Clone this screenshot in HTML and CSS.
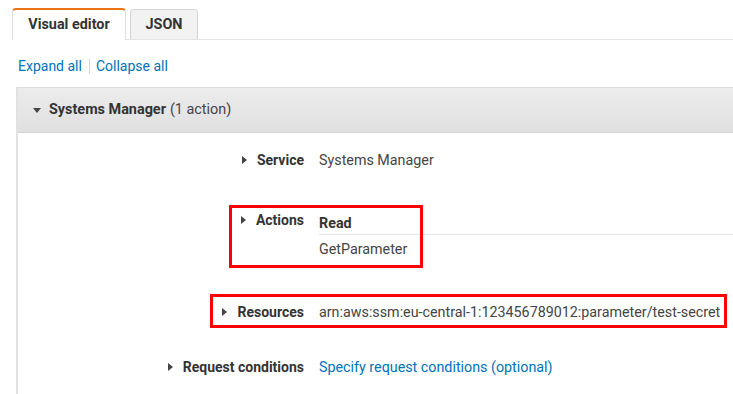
FILE: index.html
```html
<!DOCTYPE html>
<html>
<head>
<meta charset="utf-8">
<link rel="stylesheet" href="styles.css">
</head>
<body>
<div class="tabs">
  <div class="tab tab-active">Visual editor</div>
  <div class="tab">JSON</div>
</div>
<div class="links">
  <a class="link">Expand all</a>
  <span class="sep"></span>
  <a class="link">Collapse all</a>
</div>
<div class="panel">
  <div class="panel-header">
    <span class="caret-down"></span>
    <span class="panel-title">Systems Manager</span>
    <span class="panel-count">(1 action)</span>
  </div>
  <div class="panel-body">
    <div class="row row-service">
      <div class="label"><span class="caret-right"></span>Service</div>
      <div class="value">Systems Manager</div>
    </div>
    <div class="row row-actions">
      <div class="label"><span class="caret-right"></span>Actions</div>
      <div class="value">
        <div class="group-title">Read</div>
        <div class="group-item">GetParameter</div>
      </div>
      <div class="highlight highlight-actions"></div>
    </div>
    <div class="row row-resources">
      <div class="label"><span class="caret-right"></span>Resources</div>
      <div class="value">arn:aws:ssm:eu-central-1:123456789012:parameter/test-secret</div>
      <div class="highlight highlight-resources"></div>
    </div>
    <div class="row row-conditions">
      <div class="label"><span class="caret-right"></span>Request conditions</div>
      <div class="value"><a class="link">Specify request conditions (optional)</a></div>
    </div>
  </div>
</div>
</body>
</html>
```

FILE: styles.css
```css
html, body {
  margin: 0;
  padding: 0;
  background: #fff;
  overflow: hidden;
}
body {
  font-family: Roboto, "Liberation Sans", sans-serif;
  font-size: 14px;
  color: #444;
  width: 733px;
  height: 394px;
}
.tabs {
  display: flex;
  align-items: flex-end;
  margin: 8px 0 0 12px;
  height: 31px;
  border-bottom: 1px solid #e3e3e3;
}
.tab {
  box-sizing: border-box;
  height: 30px;
  border: 1px solid #d5d5d5;
  border-bottom: none;
  border-radius: 4px 4px 0 0;
  background: #f2f2f2;
  font-weight: 700;
  font-size: 14.4px;
  color: #333;
  display: flex;
  align-items: center;
  justify-content: center;
  width: 68px;
  margin-left: 4px;
}
.tab-active {
  width: 114px;
  height: 32px;
  margin-left: 0;
  margin-bottom: -1px;
  background: #fff;
  border-color: #e0e0e0;
  border-top: 2px solid #ec7211;
  padding-bottom: 1px;
}
.links {
  display: flex;
  align-items: center;
  margin: 16px 0 0 18px;
  height: 20px;
}
.link {
  color: #0073bb;
  cursor: pointer;
}
.sep {
  width: 1px;
  height: 15px;
  background: #d5d5d5;
  margin: 0 6px 0 7px;
}
.panel {
  margin: 11px 0 0 16px;
  border-left: 2px solid #e1e1e1;
  height: 307px;
  font-size: 14.3px;
}
.panel-header {
  box-sizing: border-box;
  height: 46px;
  display: flex;
  align-items: center;
  padding-left: 15px;
  padding-bottom: 1px;
  background: linear-gradient(#ececec, #e0e0e0);
  border-top: 1px solid #dcdcdc;
  border-bottom: 1px solid #d5d5d5;
  color: #333;
  font-size: 14.4px;
}
.caret-down {
  width: 0;
  height: 0;
  border-left: 4px solid transparent;
  border-right: 4px solid transparent;
  border-top: 5px solid #444;
  margin-right: 8px;
  margin-top: 1px;
}
.panel-title {
  font-weight: 700;
  margin-right: 4px;
}
.panel-count {
  color: #444;
}
.panel-body {
  padding-top: 17px;
}
.row {
  position: relative;
  display: grid;
  grid-template-columns: 286px 1fr;
  column-gap: 15px;
  line-height: 20px;
}
.label {
  display: flex;
  align-items: center;
  justify-content: flex-end;
  font-weight: 700;
  font-size: 14px;
  color: #333;
  height: 20px;
}
.caret-right {
  width: 0;
  height: 0;
  border-top: 4px solid transparent;
  border-bottom: 4px solid transparent;
  border-left: 5px solid #444;
  margin-right: 10px;
}
.value {
  color: #444;
  white-space: nowrap;
}
.row-actions {
  margin-top: 40px;
}
.group-title {
  font-weight: 700;
  color: #333;
  padding-top: 3px;
  padding-bottom: 1px;
  border-bottom: 1px solid #e6e6e6;
}
.group-item {
  padding-top: 4px;
}
.row-resources {
  margin-top: 43px;
}
.row-conditions {
  margin-top: 35px;
}
.highlight {
  position: absolute;
  box-sizing: border-box;
  border: 3px solid #ff0000;
  pointer-events: none;
}
.highlight-actions {
  left: 211px;
  top: -5px;
  width: 194px;
  height: 63px;
}
.highlight-resources {
  left: 192px;
  top: -8px;
  width: 517px;
  height: 34px;
}
```
